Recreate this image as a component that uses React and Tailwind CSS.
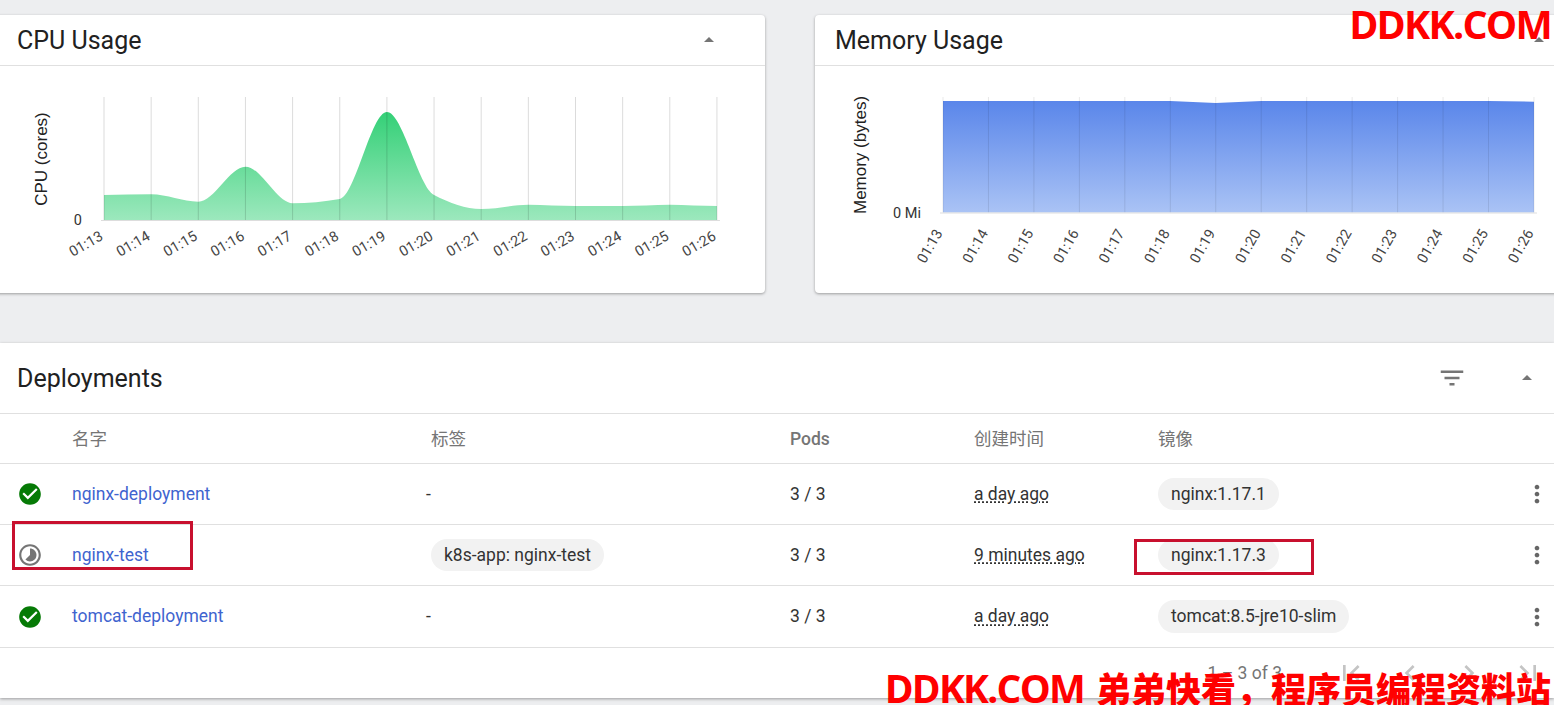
const TICKS = ["01:13", "01:14", "01:15", "01:16", "01:17", "01:18", "01:19", "01:20", "01:21", "01:22", "01:23", "01:24", "01:25", "01:26"];
const CPU_Y = [195, 194.3, 201.7, 166.7, 203.3, 199, 112, 195, 209, 204.7, 206, 206, 204.7, 206];
const MEM_Y = [101, 101, 101, 101, 101, 101, 103, 101, 101, 101, 101, 101, 101, 101.7];

const ICONS = {
  up: "M7 14l5-5 5 5z",
  filter: "M10 18h4v-2h-4v2zM3 6v2h18V6H3zm3 7h12v-2H6v2z",
  check: "M12 2C6.48 2 2 6.48 2 12s4.48 10 10 10 10-4.48 10-10S17.52 2 12 2zm-2 15l-5-5 1.41-1.41L10 14.17l7.59-7.59L19 8l-9 9z",
  timelapse: "M16.24 7.76C15.07 6.59 13.54 6 12 6v6l-4.24 4.24c2.34 2.34 6.14 2.34 8.49 0 2.34-2.34 2.34-6.14-.01-8.48zM12 2C6.48 2 2 6.48 2 12s4.48 10 10 10 10-4.48 10-10S17.52 2 12 2zm0 18c-4.42 0-8-3.58-8-8s3.58-8 8-8 8 3.58 8 8-3.58 8-8 8z",
  more: "M12 8c1.1 0 2-.9 2-2s-.9-2-2-2-2 .9-2 2 .9 2 2 2zm0 2c-1.1 0-2 .9-2 2s.9 2 2 2 2-.9 2-2-.9-2-2-2zm0 6c-1.1 0-2 .9-2 2s.9 2 2 2 2-.9 2-2-.9-2-2-2z",
  first: "M18.41 16.59L13.83 12l4.58-4.59L17 6l-6 6 6 6 1.41-1.41zM6 6h2v12H6V6z",
  prev: "M15.41 7.41L14 6l-6 6 6 6 1.41-1.41L10.83 12z",
  next: "M10 6L8.59 7.41 13.17 12l-4.58 4.59L10 18l6-6z",
  last: "M5.59 7.41L10.18 12l-4.59 4.59L7 18l6-6-6-6-1.41 1.41zM16 6h2v12h-2V6z",
};

const Icon = ({ name, className }) => (
  <svg viewBox="0 0 24 24" className={className} fill="currentColor">
    <path d={ICONS[name]} />
  </svg>
);

// same idea as d3 curveMonotoneX, flat tangents on the local peaks
function smoothPath(xs, ys) {
  const slopes = xs.map((_, i) => {
    if (i === 0 || i === xs.length - 1) return 0;
    const a = ys[i] - ys[i - 1];
    const b = ys[i + 1] - ys[i];
    if (a * b <= 0) return 0;
    return (2 * a * b) / (a + b) / (xs[1] - xs[0]);
  });
  let d = `M${xs[0]},${ys[0]}`;
  for (let i = 1; i < xs.length; i++) {
    const h = (xs[i] - xs[i - 1]) / 3;
    d += `C${xs[i - 1] + h},${ys[i - 1] + slopes[i - 1] * h},${xs[i] - h},${ys[i] - slopes[i] * h},${xs[i]},${ys[i]}`;
  }
  return d;
}

function Chart({ id, viewBox, x0, step, ys, top, base, c1, c2, angle, labelY, axis, axisX, axisY, zero, zeroX, gridOpacity, smooth }) {
  const xs = TICKS.map((_, i) => x0 + step * i);
  const line = smooth ? smoothPath(xs, ys) : "M" + xs.map((x, i) => `${x},${ys[i]}`).join("L");
  return (
    <svg viewBox={viewBox} className="block w-[775px] h-[227px]">
      <defs>
        <linearGradient id={id} x1="0" y1="0" x2="0" y2="1">
          <stop offset="0" stopColor={c1} />
          <stop offset="1" stopColor={c2} />
        </linearGradient>
      </defs>
      <path d={`${line}L${xs[13]},${base}L${xs[0]},${base}Z`} fill={`url(#${id})`} />
      {xs.map((x) => (
        <line key={x} x1={x} x2={x} y1={top} y2={base} stroke="#000" strokeOpacity={gridOpacity} />
      ))}
      <line x1={x0 - 3} x2={xs[13] + 3} y1={base + 0.5} y2={base + 0.5} stroke="#ddd" />
      {TICKS.map((t, i) => (
        <text
          key={t}
          transform={`translate(${xs[i]},${labelY}) rotate(${angle})`}
          textAnchor="end"
          fontSize="14.5"
          fill="#444"
          fontFamily="Roboto, sans-serif"
        >
          {t}
        </text>
      ))}
      <text x={zeroX} y={base + 5} textAnchor="end" fontSize="14.5" fill="#333" fontFamily="Roboto, sans-serif">
        {zero}
      </text>
      <text
        transform={`translate(${axisX},${axisY}) rotate(-90)`}
        textAnchor="middle"
        fontSize="17"
        fill="#222"
        fontFamily="'Liberation Sans', sans-serif"
      >
        {axis}
      </text>
    </svg>
  );
}

function ChartCard({ title, children }) {
  return (
    <div className="w-[775px] h-[278px] shrink-0 bg-white rounded-[4px] shadow-[0_1px_3px_rgba(0,0,0,0.35)]">
      <div className="h-[51px] border-b border-[#e0e0e0] flex items-center">{title}</div>
      {children}
    </div>
  );
}

const ROWS = [
  { name: "nginx-deployment", status: "check", labels: null, age: "a day ago", image: "nginx:1.17.1", h: "h-[61px]" },
  { name: "nginx-test", status: "timelapse", labels: "k8s-app: nginx-test", age: "9 minutes ago", image: "nginx:1.17.3", h: "h-[61px]" },
  { name: "tomcat-deployment", status: "check", labels: null, age: "a day ago", image: "tomcat:8.5-jre10-slim", h: "h-[62px]" },
];

const COLS = "grid grid-cols-[72px_359px_359px_184px_184px_1fr] items-center";

export default function App() {
  return (
    <div
      className="relative h-[705px] w-full overflow-hidden bg-[#edeef0] pt-[15px]"
      style={{ fontFamily: "Roboto, 'Noto Sans CJK SC', sans-serif" }}
    >
      <div className="flex gap-[50px] -ml-[10px]">
        <ChartCard
          title={
            <div className="flex items-center w-full pl-[27px]">
              <span className="text-[25px] text-[#212121] flex-1 pt-[1px]">CPU Usage</span>
              <Icon name="up" className="w-6 h-6 text-[#757575] mr-[44px]" />
            </div>
          }
        >
          <Chart
            id="cpuFill"
            viewBox="-10 66 775 227"
            x0={104}
            step={47.15}
            ys={CPU_Y}
            top={97}
            base={220}
            c1="#34d077"
            c2="#9ce8bd"
            angle={-30}
            labelY={239}
            axis="CPU (cores)"
            axisX={47}
            axisY={159}
            zero="0"
            zeroX={82}
            gridOpacity={0.14}
            smooth
          />
        </ChartCard>
        <ChartCard
          title={
            <div className="flex items-center w-full pl-[20px]">
              <span className="text-[25px] text-[#212121] flex-1 pt-[1px]">Memory Usage</span>
              <Icon name="up" className="w-6 h-6 text-[#757575] mr-[39px]" />
            </div>
          }
        >
          <Chart
            id="memFill"
            viewBox="815 66 775 227"
            x0={943}
            step={45.46}
            ys={MEM_Y}
            top={97}
            base={212.5}
            c1="#5a86ea"
            c2="#aac3f5"
            angle={-60}
            labelY={233}
            axis="Memory (bytes)"
            axisX={866}
            axisY={155}
            zero="0 Mi"
            zeroX={921}
            gridOpacity={0.09}
          />
        </ChartCard>
      </div>

      <div className="mt-[50px] h-[355px] bg-white shadow-[0_1px_3px_rgba(0,0,0,0.35)]">
        <div className="h-[71px] border-b border-[#e0e0e0] flex items-center pl-[17px]">
          <span className="text-[25px] text-[#212121] flex-1 pt-[1px]">Deployments</span>
          <Icon name="filter" className="w-[30px] h-[30px] text-[#757575] mr-[48px]" />
          <Icon name="up" className="w-6 h-6 text-[#757575] mr-[15px]" />
        </div>
        <div className={`${COLS} h-[50px] border-b border-[#e0e0e0] text-[17.5px] text-[#757575] pt-[1px]`}>
          <span />
          <span>名字</span>
          <span>标签</span>
          <span className="font-medium">Pods</span>
          <span>创建时间</span>
          <span>镜像</span>
        </div>
        {ROWS.map((r) => (
          <div key={r.name} className={`${COLS} ${r.h} border-b border-[#e0e0e0] text-[17.5px] text-[#333]`}>
            <Icon
              name={r.status}
              className={`w-[26px] h-[26px] ml-[17px] ${r.status === "check" ? "text-[#067a06]" : "text-[#757575]"}`}
            />
            <span className="text-[#3f64cf]">{r.name}</span>
            <div>
              {r.labels ? (
                <span className="inline-block bg-[#f2f2f2] rounded-full px-[13px] py-[3px]">{r.labels}</span>
              ) : (
                <span className="-ml-[5px]">-</span>
              )}
            </div>
            <span>3 / 3</span>
            <span className="underline decoration-dotted underline-offset-2">{r.age}</span>
            <div className="flex items-center justify-between pr-[3px]">
              <span className="bg-[#f2f2f2] rounded-full px-[13px] py-[3px]">{r.image}</span>
              <Icon name="more" className="w-[28px] h-[28px] text-[#666]" />
            </div>
          </div>
        ))}
        <div className="h-[50px] flex items-center justify-end text-[#757575] text-[17.5px]">
          <span className="mr-[53px]">1 – 3 of 3</span>
          <Icon name="first" className="w-8 h-8 text-[#c4c4c4] mr-[27px]" />
          <Icon name="prev" className="w-8 h-8 text-[#c4c4c4] mr-[27px]" />
          <Icon name="next" className="w-8 h-8 text-[#c4c4c4] mr-[27px]" />
          <Icon name="last" className="w-8 h-8 text-[#c4c4c4] mr-[10px]" />
        </div>
      </div>

      {/* annotations on top of the screenshot */}
      <div className="absolute left-[12px] top-[521px] w-[181px] h-[49px] border-[3px] border-[#c8102e]" />
      <div className="absolute left-[1134px] top-[539px] w-[180px] h-[36px] border-[3px] border-[#c8102e]" />
      <div
        className="absolute right-[3px] top-[-2px] text-[#ff0000] font-bold text-[39.5px] leading-[52px] tracking-[-0.045em]"
        style={{ fontFamily: "'Open Sans', 'Noto Sans CJK SC', sans-serif" }}
      >
        DDKK.COM
      </div>
      <div
        className="absolute right-[3px] top-[664px] flex items-baseline gap-[12px] text-[#ff0000] font-black leading-[48px] whitespace-nowrap"
        style={{ fontFamily: "'Open Sans', 'Noto Sans CJK SC', sans-serif" }}
      >
        <span className="text-[39px] tracking-[-0.045em] font-bold">DDKK.COM</span>
        <span className="text-[35px]">弟弟快看，程序员编程资料站</span>
      </div>
    </div>
  );
}
